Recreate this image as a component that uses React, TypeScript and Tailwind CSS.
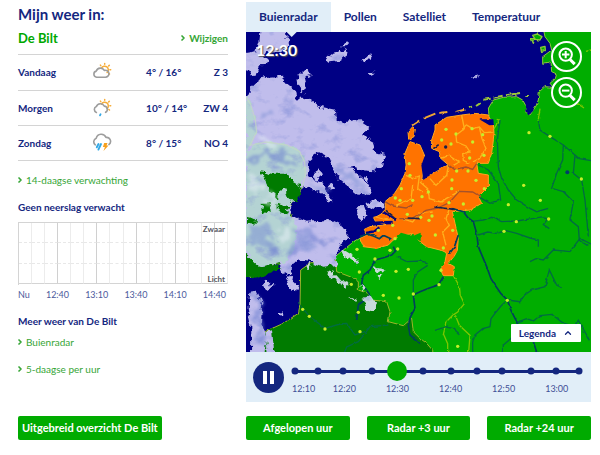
import { useState } from 'react';
import { ChevronRight, ChevronUp } from 'lucide-react';

const forecast = [
  { day: 'Vandaag', icon: 'cloud', temp: '4° / 16°', wind: 'Z 3' },
  { day: 'Morgen', icon: 'rain', temp: '10° / 14°', wind: 'ZW 4' },
  { day: 'Zondag', icon: 'storm', temp: '8° / 15°', wind: 'NO 4' },
];

const tabs = ['Buienradar', 'Pollen', 'Satelliet', 'Temperatuur'];
const rainTimes = ['Nu', '12:40', '13:10', '13:40', '14:10', '14:40'];
const radarTimes = ['12:20', '12:30', '12:40', '12:50', '13:00'];
const steps = [0, 8, 17, 27, 36, 45, 55, 64, 73, 83, 92, 100];

const rivers = [
  'M762 264L754 324L757 404L767 439L787 474L812 504L852 529L872 539L907 529',
  'M877 264L882 294L912 314L952 339L950 384L932 424L917 469L952 479L982 509L972 564L997 584L1000 625L1024 640',
  'M952 339L987 369L1000 380L1035 386',
  'M987 369L982 424L1007 444L1017 504L1027 614',
  'M697 399L727 414L757 454L764 504L732 514L697 494',
  'M672 569L712 564L737 556L767 569L812 567L862 559L892 554L904 562L892 578L910 590',
  'M697 609L725 600L752 604L780 596L812 604L852 618L877 624L877 644',
  'M852 689L870 680L892 684L922 654L972 659L1002 619L1035 636',
  'M784 804L822 809L835 790L857 774L897 764L910 714L932 759L947 767',
  'M784 804L765 822L747 844L735 860L732 884L710 890L687 909L680 930L680 960',
  'M812 871L842 860L862 867L882 851L917 847L952 874L985 882L997 865L1022 909L1030 925',
  'M772 960L772 939L807 909',
  'M452 674L482 689L522 687L545 692',
  'M157 814L192 854L237 889L282 876L302 874L327 909L357 899',
  'M427 879L372 884L357 905L337 929L302 945L296 960',
  'M567 895L600 884L622 890L640 905',
  'M502 789L502 744L515 720L545 700',
];

const bigRivers = [
  'M617 529L652 539L665 556L682 569L692 604L697 644L712 680L722 704L735 740L747 759L765 785L784 804L795 835L812 869L840 905L862 929L872 960',
  'M637 609L625 645L610 665',
  'M592 734L577 759L550 768L522 779L502 789L507 829L493 855L487 879L492 909L522 934',
  'M442 644L448 658L437 669L410 678L387 684L372 714L352 730L347 754L372 789L355 805L337 819L332 864',
  'M342 615L362 606L382 612L400 620L412 610L436 621',
];

const provinces = [
  'M584 379L610 370L640 390L622 400',
  'M647 249L655 290L630 310L632 330L660 342L672 360L650 365L652 385L670 394',
  'M742 300L715 302L700 285L680 290L660 278L650 295',
  'M700 285L708 320L720 350L700 380L680 390',
  'M607 399L602 430L570 460L552 440',
  'M480 430L500 440L520 432L515 470L530 480',
  'M522 450L545 470L550 500L585 510L600 500L640 478',
  'M570 525L610 530L600 560L610 580L590 600L600 640',
  'M500 460L495 500L450 520',
  'M470 560L500 570L520 545L560 540',
];

const cities = [
  [490, 395], [492, 430], [466, 470], [448, 498], [462, 505], [484, 547], [500, 505], [528, 494], [547, 480], [558, 552],
  [524, 556], [549, 565], [568, 609], [618, 444], [617, 470], [609, 512], [632, 417], [666, 417], [690, 445], [652, 516],
  [715, 470], [600, 292], [630, 306], [587, 324], [678, 290], [710, 308], [680, 330], [714, 370], [615, 336], [671, 378],
  [620, 595], [592, 648], [447, 620], [397, 595], [849, 302], [912, 313], [833, 460], [883, 505], [787, 518], [908, 561],
  [811, 569], [774, 598], [1006, 441], [585, 715], [579, 758], [784, 805], [635, 943], [455, 651], [387, 681], [333, 652],
  [340, 720], [316, 757], [450, 718], [487, 712], [412, 790], [459, 798], [502, 786], [337, 841], [342, 899], [237, 891],
  [190, 853], [170, 832], [432, 655], [440, 580],
];

function WeatherIcon({ kind }: { kind: string }) {
  return (
    <svg viewBox="0 0 20 20" className="h-5 w-5" fill="none" strokeLinecap="round" strokeLinejoin="round" aria-hidden="true">
      {kind !== 'storm' && (
        <g stroke="#f6ad3a" strokeWidth="1.5">
          <path d="M9.5 6.2a3.6 3.6 0 1 1 5.6 4.3" />
          <path d="M12.7 2.3V1.6M8.8 3.6l-.4-.5M16.7 3.9l.6-.6M17.9 7.8h.8M16.9 11.5l.6.5" />
        </g>
      )}
      {kind === 'cloud' && (
        <path stroke="#9d9d9d" strokeWidth="1.6" d="M4.6 15.2a3.1 3.1 0 0 1-.3-6.1 4.4 4.4 0 0 1 8-.7 3.5 3.5 0 1 1 .8 6.8z" />
      )}
      {kind === 'rain' && (
        <>
          <path stroke="#9d9d9d" strokeWidth="1.6" d="M4.4 14.4a3.1 3.1 0 0 1-.1-5.8 4.4 4.4 0 0 1 8-.5 3.3 3.3 0 0 1 1.3 6.2" />
          <path stroke="#34a9e6" strokeWidth="1.8" d="M8.6 16.2l-.6 1.2" />
        </>
      )}
      {kind === 'storm' && (
        <>
          <path stroke="#9d9d9d" strokeWidth="1.6" d="M3.3 11.8a3.8 3.8 0 0 1 .9-6.6 5.2 5.2 0 0 1 9.8-.8 4 4 0 0 1 3 7.1" />
          <path stroke="#34a9e6" strokeWidth="1.9" d="M6.5 11l-1.7 3.3M9 11l-2.6 5.6" />
          <path fill="#f6a01e" d="M12.2 10h3.3l-1 2.5h2l-5 5.6 1.4-4h-2z" />
        </>
      )}
    </svg>
  );
}

function ArrowLink({ children, className = '' }: { children: string; className?: string }) {
  return (
    <a href="#" className={`flex items-center gap-0.5 text-[#35a535] ${className}`}>
      <ChevronRight className="-ml-0.5 size-2" strokeWidth={5} />
      {children}
    </a>
  );
}

function RadarMap() {
  return (
    <svg viewBox="0 0 1035 960" className="block w-full bg-[#000084]" role="img" aria-label="Radarkaart">
      <defs>
        <filter id="coast" x="-5%" y="-5%" width="110%" height="110%" colorInterpolationFilters="sRGB">
          <feTurbulence type="fractalNoise" baseFrequency="0.06" numOctaves="2" seed="4" />
          <feDisplacementMap in="SourceGraphic" scale="8" xChannelSelector="R" yChannelSelector="G" />
        </filter>
        <filter id="ragged" x="-5%" y="-5%" width="110%" height="110%" colorInterpolationFilters="sRGB">
          <feTurbulence type="fractalNoise" baseFrequency="0.05" numOctaves="3" seed="9" />
          <feDisplacementMap in="SourceGraphic" scale="24" xChannelSelector="R" yChannelSelector="G" />
        </filter>
        {/* Ragged edge plus a blue mottling inside the shape */}
        <filter id="cloud" x="-5%" y="-5%" width="110%" height="110%" colorInterpolationFilters="sRGB">
          <feTurbulence type="fractalNoise" baseFrequency="0.05" numOctaves="3" seed="9" result="edge" />
          <feDisplacementMap in="SourceGraphic" in2="edge" scale="24" xChannelSelector="R" yChannelSelector="G" result="shape" />
          <feTurbulence type="fractalNoise" baseFrequency="0.02 0.028" numOctaves="4" seed="21" />
          <feColorMatrix values="0 0 0 0 0.5  0 0 0 0 0.55  0 0 0 0 0.84  1.8 0 0 0 -0.95" result="mottle" />
          <feComposite in="mottle" in2="shape" operator="in" result="inner" />
          <feMerge>
            <feMergeNode in="shape" />
            <feMergeNode in="inner" />
          </feMerge>
        </filter>
        <filter id="soft" x="-20%" y="-20%" width="140%" height="140%" colorInterpolationFilters="sRGB">
          <feTurbulence type="fractalNoise" baseFrequency="0.03" numOctaves="3" seed="2" result="n" />
          <feDisplacementMap in="SourceGraphic" in2="n" scale="60" xChannelSelector="R" yChannelSelector="G" />
          <feGaussianBlur stdDeviation="4" />
        </filter>
        <clipPath id="uk">
          <path d="M0 190L12 214L27 264L32 304L7 344L0 354L42 334L80 330L122 339L155 352L172 369L180 414L167 469L132 519L115 530L134 545L150 590L150 640L120 700L90 695L60 712L22 734L0 730z" />
        </clipPath>
      </defs>

      {/* Land */}
      <g filter="url(#coast)" strokeLinejoin="round">
        <path fill="#00ad00" stroke="#8cc63a" strokeWidth="3" d="M892 -10L897 14L912 34L917 54L890 74L890 94L915 90L917 119L932 126L928 140L912 154L922 166L897 164L880 179L877 204L870 222L852 249L838 240L842 226L830 204L812 194L772 196L742 204L727 229L729 252L744 290L650 480L342 619L317 634L267 674L272 719L300 980L1060 980L1060 -10z" />
        <path fill="#007b00" stroke="#9cb529" strokeWidth="3" d="M192 694L164 714L162 819L157 844L112 874L57 899L36 980L562 980L560 955L542 934L522 919L502 899L497 859L472 881L427 869L432 839L422 809L377 804L367 784L337 774L337 749L312 734L272 719L267 674z" />
        <path fill="#007b00" stroke="#8cad4a" strokeWidth="3" d="M-10 190L12 214L27 264L32 304L7 344L42 334L80 330L122 339L155 352L172 369L180 414L167 469L132 519L115 530L134 545L150 590L150 640L120 700L90 695L60 712L22 734L-10 730z" />
        <path fill="#ff7300" stroke="#ffa51e" strokeWidth="3" d="M727 249L687 244L647 249L602 256L567 279L567 294L557 324L557 349L580 359L584 379L607 399L590 407L552 429L527 444L532 414L542 395L535 369L522 339L492 329L477 364L480 400L477 424L462 459L445 485L417 509L418 532L400 552L382 556L388 568L420 578L372 584L355 592L362 609L342 619L352 644L392 649L427 639L442 624L462 610L500 605L522 629L542 644L582 654L602 664L597 689L584 714L592 731L622 731L625 704L607 694L625 672L634 655L637 619L627 574L619 539L672 534L707 514L697 494L727 464L727 429L697 424L692 394L727 394L737 364L744 304L742 274z" />
        <path fill="#ff7300" stroke="#ffa51e" strokeWidth="3" d="M488 322L486 300L500 284L508 292L504 314zM390 555L412 542L440 552L445 565L415 562z" />
        <path fill="#00ad00" d="M452 615L465 602L500 612L524 602L524 628L495 612L470 620z" />
        <path fill="#000084" d="M840 214L858 222L866 214L862 236L848 250L838 238zM532 444L526 400L535 375L550 350L575 362L582 392L600 400L560 424zM700 262L742 262L744 279L730 280z" />
        <path fill="none" stroke="#000084" strokeWidth="7" d="M412 540L450 565M388 572L440 570M360 603L385 598L400 586" />
        <path fill="none" stroke="#f0a832" strokeWidth="6" d="M498 280L520 266M533 259L568 245M580 243L604 240M632 239L655 233" />
        <path fill="none" stroke="#9cc63a" strokeWidth="6" d="M667 228L678 224M690 222L702 214M712 203L734 200M742 197L770 191M780 190L822 183M838 195L846 195" />
        <path fill="#00ad00" stroke="#8cc63a" strokeWidth="4" d="M860 10L874 6L888 14L882 24L868 22zM884 46L897 43L898 56L886 58zM856 20L866 20L862 34z" />
      </g>

      {/* Borders, provinces and rivers */}
      <g fill="none" filter="url(#coast)">
        <path stroke="#7bc600" strokeWidth="4" d="M744 290L760 264L752 262M877 262L882 230M622 731L640 762L643 790L655 815L635 840L620 850L600 870L592 905L605 935L605 960M628 850L640 880L672 910L668 960M995 215L1014 228M1020 58L1035 54" />
        {provinces.map((d) => (
          <path key={d} d={d} stroke="#ffb01b" strokeWidth="4" />
        ))}
        {rivers.map((d) => (
          <path key={d} d={d} stroke="#006b42" strokeWidth="4" />
        ))}
        {bigRivers.map((d) => (
          <path key={d} d={d} stroke="#00415a" strokeWidth="5" />
        ))}
        <path stroke="#a5522a" strokeWidth="4" d="M417 509L440 522L480 528L500 518M460 560L500 560L540 535L575 528M575 528L610 512L640 478L680 480L705 495M607 399L625 412L660 405L680 412L692 395" />
        <path stroke="#18204a" strokeWidth="5" d="M420 535L450 560M485 558L522 560M562 350L578 338M565 525L625 532" />
      </g>
      <g fill="#c6ee2a">
        {cities.map(([x, y]) => (
          <circle key={`${x}-${y}`} cx={x} cy={y} r="5" />
        ))}
      </g>
      <circle cx="964" cy="421" r="6" fill="#003c6b" />
      <circle cx="599" cy="345" r="5" fill="#18204a" />

      {/* Clouds */}
      <g filter="url(#cloud)">
        <path fill="#c0bdec" d="M45 -20L118 -20L122 20L138 40L110 62L60 60L54 72L70 85L66 98L40 100L32 128L15 130L0 110L-20 90L-20 66L30 58L40 30zM27 148L62 135L112 131L122 154L147 174L152 199L197 204L222 224L267 234L269 265L290 272L332 262L367 284L345 309L382 329L387 359L417 369L407 404L382 418L345 414L307 399L342 439L377 469L372 489L332 484L282 444L262 414L247 379L217 364L187 389L182 429L222 449L267 514L255 512L222 479L177 464L167 469L132 519L134 549L182 569L252 564L292 584L312 614L282 639L267 669L272 699L232 704L192 689L162 684L137 694L132 734L112 719L100 690L42 704L12 679L-20 650L-20 200L5 190z" />
        <path fill="#c0bdec" d="M240 82L262 62L300 52L308 66L280 86L250 92zM282 46L306 22L312 26L296 46zM352 82L372 64L378 74L362 88zM155 130L178 108L194 132L172 140L180 175L168 184L160 160zM205 425L222 412L228 430L212 444zM248 458L262 453L267 468L252 474zM355 510L380 505L414 516L410 530L370 526zM330 530L352 520L362 545L350 568L332 555zM350 438L366 434L362 454zM120 738L136 734L156 760L150 778L132 764zM44 760L62 748L86 762L66 774zM10 780L30 776L48 820L45 870L60 920L55 970L15 970L16 880L5 830zM58 900L78 895L86 970L62 970zM674 136L696 130L692 142zM366 122L382 122L378 132zM100 848L110 836L108 852z" />
        <path fill="#c9dada" d="M240 714L262 720L290 750L308 756L300 764L262 742zM286 650L300 658L338 680L336 694L300 680zM352 798L372 788L390 815L384 836L362 830zM380 702L415 710L412 722L395 717zM388 728L412 730L404 744zM342 755L360 768L350 776zM184 698L196 692L190 714zM308 793L330 804L328 810z" />
        <g clipPath="url(#uk)">
          <path fill="#b4d3d3" d="M0 180H190V700L100 690L42 704L12 679L0 650z" />
        </g>
      </g>
      <path filter="url(#ragged)" fill="#007b00" d="M45 418L80 425L120 425L142 448L168 462L164 490L145 510L125 490L118 472L100 476L96 500L70 470zM40 510L72 508L74 545L50 540L55 524zM0 555L30 562L28 575L0 572zM95 512L130 525L120 545L95 535zM0 680L12 690L42 708L90 698L110 705L30 740L0 735z" />
      <g filter="url(#soft)" opacity="0.55">
        <path fill="none" stroke="#6c7fd0" strokeWidth="14" d="M20 390L60 360L110 372L150 400M20 640L60 625L100 660M150 590L200 610L230 640M35 790L45 860L40 940M130 670L150 640" />
        <path fill="#7c90d4" d="M40 245L85 240L80 256L45 258zM10 590L60 570L90 600L40 650zM280 415L310 425L365 480L330 465zM185 440L220 455L245 490L200 460zM150 620L190 600L200 640L160 650z" />
        <path fill="#e4eef4" d="M20 430L50 450L20 500zM90 610L150 560L110 640zM40 320L100 325L60 345zM60 480L90 500L85 540z" />
      </g>
      <path fill="none" stroke="#c3d9c3" strokeWidth="4" opacity="0.7" d="M0 195L14 218L28 264L32 300L12 340L60 330L122 339L160 358L176 390L178 430L168 470" />
      <path fill="#e1eef8" d="M122 0H152L137 15z" />
    </svg>
  );
}

function ZoomButton({ label, plus }: { label: string; plus?: boolean }) {
  return (
    <button aria-label={label} className="size-[31px]">
      <svg viewBox="0 0 31 31" className="size-full" fill="none" stroke="#fff">
        <circle cx="15.5" cy="15.5" r="14.5" strokeWidth="2" />
        <circle cx="14.7" cy="13.6" r="6.2" strokeWidth="2" />
        <path strokeWidth="3" d="M18.8 18.2l4.9 4.9" />
        <path strokeWidth="2" d={plus ? 'M11 13.6h7.4M14.7 9.9v7.4' : 'M11 13.6h7.4'} />
      </svg>
    </button>
  );
}

export default function App() {
  const [activeTab, setActiveTab] = useState('Buienradar');
  const [time, setTime] = useState(36);

  return (
    <div className="grid grid-cols-[210fr_345fr] gap-[18px] bg-white pt-0.5 pr-[9px] pb-3.5 pl-[18px] font-['Lato','Open_Sans',sans-serif] text-[10px] leading-4 text-[#14277f]">
      <section className="flex flex-col">
        <h1 className="text-[15px] leading-6 font-bold">Mijn weer in:</h1>
        <div className="flex h-[29px] items-center justify-between border-b border-[#d4d4d4] pb-1">
          <h2 className="text-[13px] font-bold text-[#00a800]">De Bilt</h2>
          <ArrowLink className="font-bold">Wijzigen</ArrowLink>
        </div>

        <table className="w-full table-fixed font-bold">
          <tbody>
            {forecast.map((row) => (
              <tr key={row.day} className="h-[35px] border-b border-[#d4d4d4]">
                <th scope="row" className="w-[35%] text-left font-bold">{row.day}</th>
                <td className="w-[26%]"><WeatherIcon kind={row.icon} /></td>
                <td className="w-[20%] whitespace-nowrap">{row.temp}</td>
                <td className="text-right">{row.wind}</td>
              </tr>
            ))}
          </tbody>
        </table>

        <ArrowLink className="mt-[11px]">14-daagse verwachting</ArrowLink>
        <h3 className="mt-[11px] font-bold">Geen neerslag verwacht</h3>

        {/* Rain chart */}
        <div className="relative mt-[7px] grid h-[63px] grid-cols-16 grid-rows-3 border-t border-l border-[#d4d4d4]">
          {Array.from({ length: 48 }, (_, i) => (
            <div
              key={i}
              className={`border-r border-b ${(i % 16) % 3 === 2 ? 'border-r-[#d0d0d0]' : 'border-r-[#ececec]'} ${i >= 32 ? 'border-b-[#d4d4d4]' : 'border-b-[#e8e8e8] [border-bottom-style:dashed]'}`}
            />
          ))}
          <div className="absolute inset-y-0 right-[3px] flex flex-col justify-between text-right text-[8px] leading-3 font-bold text-[#56565e]">
            <span>Zwaar</span>
            <span>Licht</span>
          </div>
        </div>
        <div className="flex justify-between pt-0.5 pr-0.5 text-[9px] text-[#4c5a9c]">
          {rainTimes.map((t) => (
            <span key={t}>{t}</span>
          ))}
        </div>

        <h3 className="mt-2.5 font-bold">Meer weer van De Bilt</h3>
        <ArrowLink className="mt-[5px]">Buienradar</ArrowLink>
        <ArrowLink className="mt-[11px]">5-daagse per uur</ArrowLink>
        <button className="mt-auto h-6 self-start rounded-xs bg-[#00ab00] px-1 text-[11px] font-bold whitespace-nowrap text-white">
          Uitgebreid overzicht De Bilt
        </button>
      </section>

      <section>
        <div role="tablist" className="flex h-[30px] text-[12px] font-bold">
          {tabs.map((tab) => (
            <button
              key={tab}
              role="tab"
              aria-selected={tab === activeTab}
              onClick={() => setActiveTab(tab)}
              className={`px-[13px] ${tab === activeTab ? 'bg-[#e1eef8]' : ''}`}
            >
              {tab}
            </button>
          ))}
        </div>

        <div className="relative overflow-hidden">
          <RadarMap />
          <div className="absolute top-2 left-2.5 text-[16px] leading-5 font-bold text-white [text-shadow:1px_1px_1px_#555]">12:30</div>
          <div className="absolute top-[9px] right-[9px] flex flex-col gap-[5px]">
            <ZoomButton label="Zoom in" plus />
            <ZoomButton label="Zoom uit" />
          </div>
          <button className="absolute right-2.5 bottom-2.5 flex h-[18px] items-center gap-[7px] rounded-[1px] bg-white px-2 text-[10px] font-bold">
            Legenda
            <ChevronUp className="size-2.5" strokeWidth={3} />
          </button>
        </div>

        {/* Player */}
        <div className="flex h-[50px] items-center bg-[#e1eef8] pr-3 pl-[7px]">
          <button aria-label="Pauze" className="flex size-[31px] shrink-0 items-center justify-center gap-[3px] rounded-full bg-[#14277f]">
            <span className="h-[13px] w-1 bg-white" />
            <span className="h-[13px] w-1 bg-white" />
          </button>
          <div className="ml-[11px] flex-1 pt-3">
            <div className="relative h-[3px] bg-[#14277f]">
              {steps.map((s) => (
                <span
                  key={s}
                  className="absolute top-1/2 size-[7px] -translate-1/2 rounded-full bg-[#14277f]"
                  style={{ left: `${s}%` }}
                />
              ))}
              <input
                type="range"
                aria-label="Tijdstip"
                min={0}
                max={100}
                value={time}
                onChange={(e) => setTime(Number(e.target.value))}
                className="absolute top-1/2 -left-2.5 h-5 w-[calc(100%+20px)] -translate-y-1/2 appearance-none bg-transparent [&::-webkit-slider-thumb]:size-5 [&::-webkit-slider-thumb]:appearance-none [&::-webkit-slider-thumb]:rounded-full [&::-webkit-slider-thumb]:bg-[#00ab00]"
              />
            </div>
            <div className="mt-2 -ml-[3px] flex text-[9px] text-[#3f4f96]">
              <span className="w-[9%] shrink-0">12:10</span>
              {radarTimes.map((t) => (
                <span key={t} className="w-[18.5%] shrink-0 text-center">{t}</span>
              ))}
            </div>
          </div>
        </div>

        <div className="mt-3.5 grid grid-cols-3 gap-[17px] text-[11px] font-bold text-white">
          <button className="h-6 rounded-xs bg-[#00ab00]">Afgelopen uur</button>
          <button className="h-6 rounded-xs bg-[#00ab00]">Radar +3 uur</button>
          <button className="h-6 rounded-xs bg-[#00ab00]">Radar +24 uur</button>
        </div>
      </section>
    </div>
  );
}
